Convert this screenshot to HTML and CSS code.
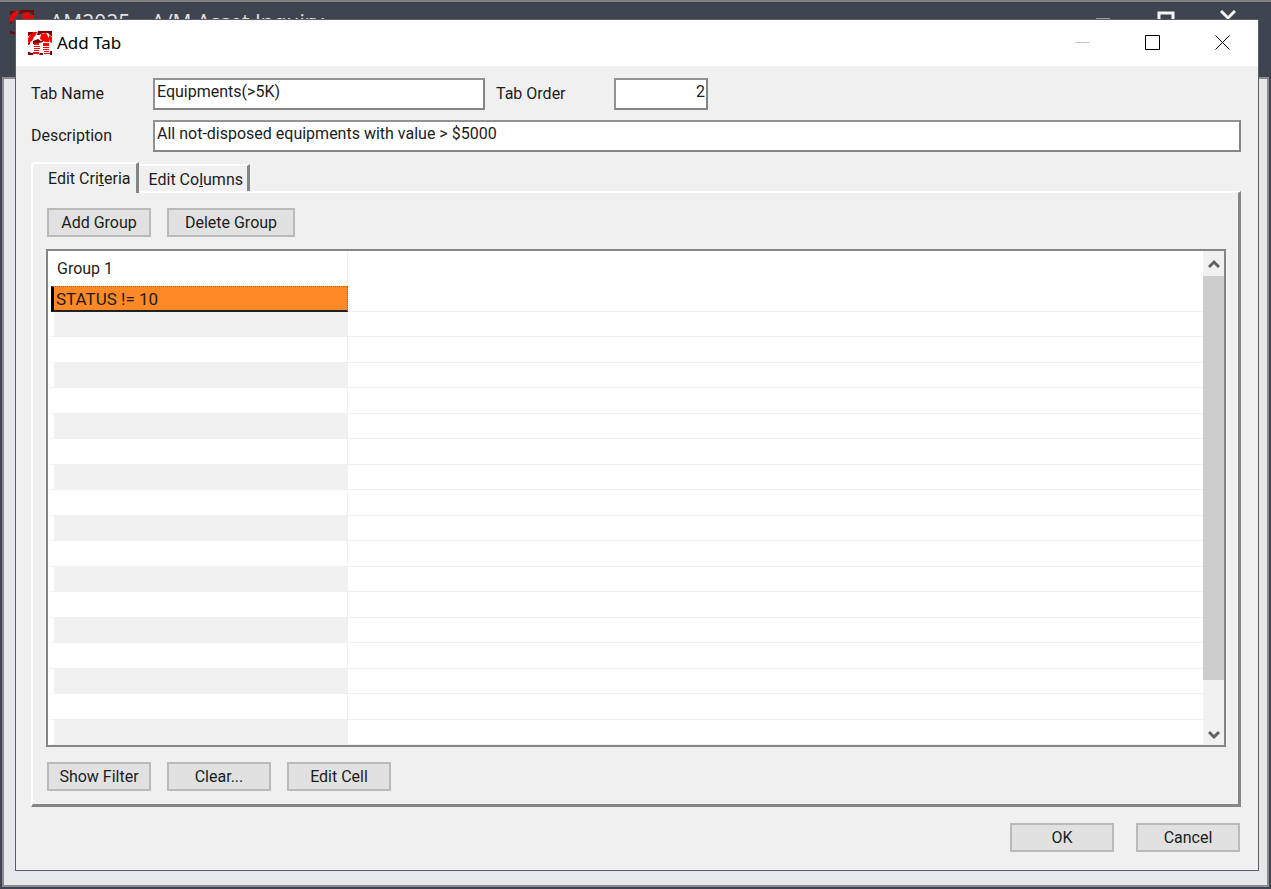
FILE: index.html
```html
<!DOCTYPE html>
<html lang="en">

<head>
  <meta charset="UTF-8">
  <meta name="viewport" content="width=device-width, initial-scale=1.0">
  <title>Add Tab</title>
  <link rel="stylesheet" href="styles.css">
</head>

<body>
  <svg width="0" height="0" class="defs">
    <symbol id="logo" viewBox="0 0 24 24">
      <path fill="#7c0000" d="M0 1h6l-2 2-2 1-2 1zM10 0h14v5h-1l-3-3h-5l-4 2h-2zM0 12l2-1v2l-2 1zM5 10l5-2 3 2 2-1v2l-4 1-6 1zM0 21h2l1 1h2v2h-5zM12 22h3v2h-4zM22 20h2v4h-2z" />
      <path fill="#f00" d="M6 1h3l-1 3-2 2-2 4-4 2v-5l2-3 2-2zM13 3l5-1 3 5v4h-4l-5-3zM21 4l3 2v6l-2-1-1-3z" />
      <path fill="#f00" d="M6 12h5v2h-5zM6 15h6v1h-6zM6 17h6v1h-6zM6 19h5v1h-5zM5 21h6v2h-6zM15 12h6v3h-6zM15 16h6v1h-6zM15 18h6v1h-6zM16 20h5v1h-5zM16 22h6v1h-6z" />
    </symbol>
  </svg>

  <div class="parent">
    <div class="parent-title">
      <svg class="logo logo-dark"><use href="#logo" /></svg>
      <span class="parent-name">AM2025 – A/M Asset Inquiry</span>
      <svg class="parent-controls" viewBox="0 0 140 16">
        <path d="M0 10h14M63 16V3h14v13M125 1l7 7 7-7" />
      </svg>
    </div>
    <div class="parent-body"></div>
  </div>

  <div class="dialog">
    <div class="titlebar">
      <svg class="logo logo-light"><use href="#logo" /></svg>
      <h1>Add Tab</h1>
      <button class="win-btn" aria-label="Minimize" disabled><svg viewBox="0 0 16 16"><path d="M0 7.5h15" stroke="#c8c8c8" /></svg></button>
      <button class="win-btn" aria-label="Maximize"><svg viewBox="0 0 16 16"><path d="M.5.5h14v14h-14z" stroke="#000" /></svg></button>
      <button class="win-btn" aria-label="Close"><svg viewBox="0 0 16 16"><path d="M.5.5l14 14M14.5.5l-14 14" stroke="#000" /></svg></button>
    </div>

    <div class="content">
      <div class="form-row">
        <label for="tabName">Tab Name</label>
        <input type="text" id="tabName" class="name" value="Equipments(&gt;5K)">
        <label for="tabOrder" class="order-label">Tab Order</label>
        <input type="text" id="tabOrder" class="order" value="2">
      </div>
      <div class="form-row">
        <label for="description">Description</label>
        <input type="text" id="description" class="description" value="All not-disposed equipments with value &gt; $5000">
      </div>

      <div class="tabs" role="tablist">
        <button class="tab active" role="tab" aria-selected="true">Edit Cri<u>t</u>eria</button>
        <button class="tab" role="tab" aria-selected="false">Edit Co<u>l</u>umns</button>
      </div>

      <div class="panel">
        <div class="buttons">
          <button class="btn">Add Group</button>
          <button class="btn wide">Delete Group</button>
        </div>

        <div class="grid">
          <table>
            <thead>
              <tr><th>Group 1</th><th></th></tr>
            </thead>
            <tbody>
              <tr class="selected"><td><div class="cell">STATUS != 10</div></td><td></td></tr>
              <tr><td></td><td></td></tr>
              <tr><td></td><td></td></tr>
              <tr><td></td><td></td></tr>
              <tr><td></td><td></td></tr>
              <tr><td></td><td></td></tr>
              <tr><td></td><td></td></tr>
              <tr><td></td><td></td></tr>
              <tr><td></td><td></td></tr>
              <tr><td></td><td></td></tr>
              <tr><td></td><td></td></tr>
              <tr><td></td><td></td></tr>
              <tr><td></td><td></td></tr>
              <tr><td></td><td></td></tr>
              <tr><td></td><td></td></tr>
              <tr><td></td><td></td></tr>
              <tr><td></td><td></td></tr>
              <tr><td></td><td></td></tr>
            </tbody>
          </table>
          <div class="scrollbar">
            <button class="arrow" aria-label="Scroll up"><svg viewBox="0 0 12 10"><path d="M1 8l5-5 5 5" /></svg></button>
            <div class="track"><div class="thumb"></div></div>
            <button class="arrow down" aria-label="Scroll down"><svg viewBox="0 0 12 10"><path d="M1 2l5 5 5-5" /></svg></button>
          </div>
        </div>

        <div class="buttons">
          <button class="btn">Show Filter</button>
          <button class="btn">Clear...</button>
          <button class="btn">Edit Cell</button>
        </div>
      </div>

      <div class="footer">
        <button class="btn">OK</button>
        <button class="btn">Cancel</button>
      </div>
    </div>
  </div>
</body>

</html>
```
FILE: styles.css
```css
* {
  box-sizing: border-box;
}

body {
  margin: 0;
  height: 100vh;
  position: relative;
  overflow: hidden;
  font-family: Roboto, "Liberation Sans", sans-serif;
  font-size: 16px;
  line-height: 20px;
  color: #1c1c1c;
  background-color: #3e4450;
}

button,
input {
  font: inherit;
  color: inherit;
  margin: 0;
  border-radius: 0;
}

.defs {
  position: absolute;
}

.logo {
  width: 24px;
  height: 24px;
  flex: none;
}

.logo-dark {
  opacity: 0.9;
}

/* window behind the dialog */
.parent {
  height: 100%;
  display: flex;
  flex-direction: column;
  border-top: 2px solid #808080;
  padding: 0 2px 2px;
}

.parent-title {
  height: 75px;
  flex: none;
  display: flex;
  align-items: flex-start;
  padding: 8px 33px 0 8px;
  color: #e4e4e4;
}

.parent-name {
  flex: 1;
  margin-left: 16px;
  font-family: "Open Sans", sans-serif;
  font-size: 21px;
  line-height: 24px;
}

.parent-controls {
  width: 140px;
  height: 16px;
  fill: none;
  stroke: #f4f4f4;
  stroke-width: 3;
}

.parent-body {
  flex: 1;
  background-color: #e6e7eb;
  border: 2px solid #8c8c90;
}

.dialog {
  position: absolute;
  top: 19px;
  right: 12px;
  bottom: 18px;
  left: 15px;
  display: flex;
  flex-direction: column;
  background-color: #f0f0f0;
  border: 1px solid #5a5d63;
}

.titlebar {
  height: 46px;
  flex: none;
  display: flex;
  align-items: center;
  padding-left: 12px;
  background-color: #fff;
  color: #000;
}

.titlebar h1 {
  flex: 1;
  margin: 0 0 0 5px;
  font-family: "Noto Sans", sans-serif;
  font-size: 17px;
  font-weight: normal;
}

.win-btn {
  width: 70px;
  height: 46px;
  padding: 0;
  border: none;
  background: none;
}

.win-btn svg {
  width: 16px;
  height: 16px;
  display: block;
  margin: 0 auto;
  fill: none;
}

.content {
  flex: 1;
  display: flex;
  flex-direction: column;
  padding: 12px 17px 18px 15px;
}

.form-row {
  display: flex;
  align-items: center;
  margin-bottom: 10px;
}

.form-row label {
  width: 122px;
}

.form-row .order-label {
  width: 118px;
  margin-left: 11px;
}

.form-row input {
  height: 32px;
  padding: 0 2px 6px;
  border: 2px solid #929292;
  border-right-color: #858585;
  border-bottom-color: #858585;
  background-color: #fff;
}

.form-row .name {
  width: 332px;
}

.form-row .order {
  width: 94px;
  padding-right: 1px;
  text-align: right;
}

.form-row .description {
  flex: 1;
}

.tabs {
  display: flex;
  align-items: flex-end;
}

.tab {
  height: 27px;
  padding: 2px 4px 0 10px;
  border: 2px solid #fff;
  border-right: 3px solid #858585;
  border-bottom: none;
  border-left: none;
  background-color: #f0f0f0;
}

.tab.active {
  height: 31px;
  padding: 0 5px 0 15px;
  border-left: 2px solid #fff;
  border-top-left-radius: 4px;
  margin-bottom: -2px;
  z-index: 1;
}

.panel {
  flex: 1;
  display: flex;
  flex-direction: column;
  gap: 12px;
  padding: 15px 12px 13px 13px;
  border: 2px solid #fff;
  border-right: 3px solid #858585;
  border-bottom: 3px solid #858585;
}

.buttons {
  display: flex;
  gap: 16px;
  padding: 0 1px;
}

.buttons:last-child {
  margin-top: 3px;
}

.btn {
  width: 104px;
  height: 29px;
  padding: 0;
  border: 2px solid #bababa;
  background-color: #e1e1e1;
}

.btn:hover {
  background-color: #e5f1fb;
}

.btn.wide {
  width: 128px;
}

.grid {
  flex: 1;
  display: flex;
  border: 2px solid #858585;
  background-color: #fff;
}

table {
  flex: 1;
  table-layout: fixed;
  border-collapse: separate;
  border-spacing: 0;
}

th,
td {
  padding: 0;
  border-bottom: 1px solid #f0f0f0;
}

th {
  height: 35px;
  padding-left: 9px;
  text-align: left;
  font-weight: normal;
  border-bottom: none;
}

th:first-child,
td:first-child {
  width: 300px;
  border-right: 1px solid #f0f0f0;
}

td:first-child {
  border-left: 6px solid #fff;
}

tbody tr:nth-child(even) td:first-child {
  background-color: #f1f1f1;
}

.selected td {
  height: 26px;
}

tbody .selected td:first-child {
  border-left: 3px solid #fff;
  border-right: none;
  border-bottom: none;
}

.cell {
  height: 26px;
  padding-left: 2px;
  font-size: 17px;
  line-height: 24px;
  background-color: #ff8827;
  border: 1px dotted #3c82b4;
  border-left: 3px solid #000;
  border-bottom: 2px solid #222;
}

.scrollbar {
  width: 21px;
  display: flex;
  flex-direction: column;
  background-color: #f0f0f0;
}

.arrow {
  height: 25px;
  padding: 0;
  border: none;
  background: none;
}

.arrow.down {
  height: 20px;
}

.arrow svg {
  width: 12px;
  height: 10px;
  display: block;
  margin: 0 auto;
  fill: none;
  stroke: #606060;
  stroke-width: 3;
}

.track {
  flex: 1;
}

.thumb {
  height: 90%;
  background-color: #cdcdcd;
}

.footer {
  display: flex;
  justify-content: flex-end;
  gap: 22px;
  margin-top: 16px;
  padding-right: 1px;
}
```
